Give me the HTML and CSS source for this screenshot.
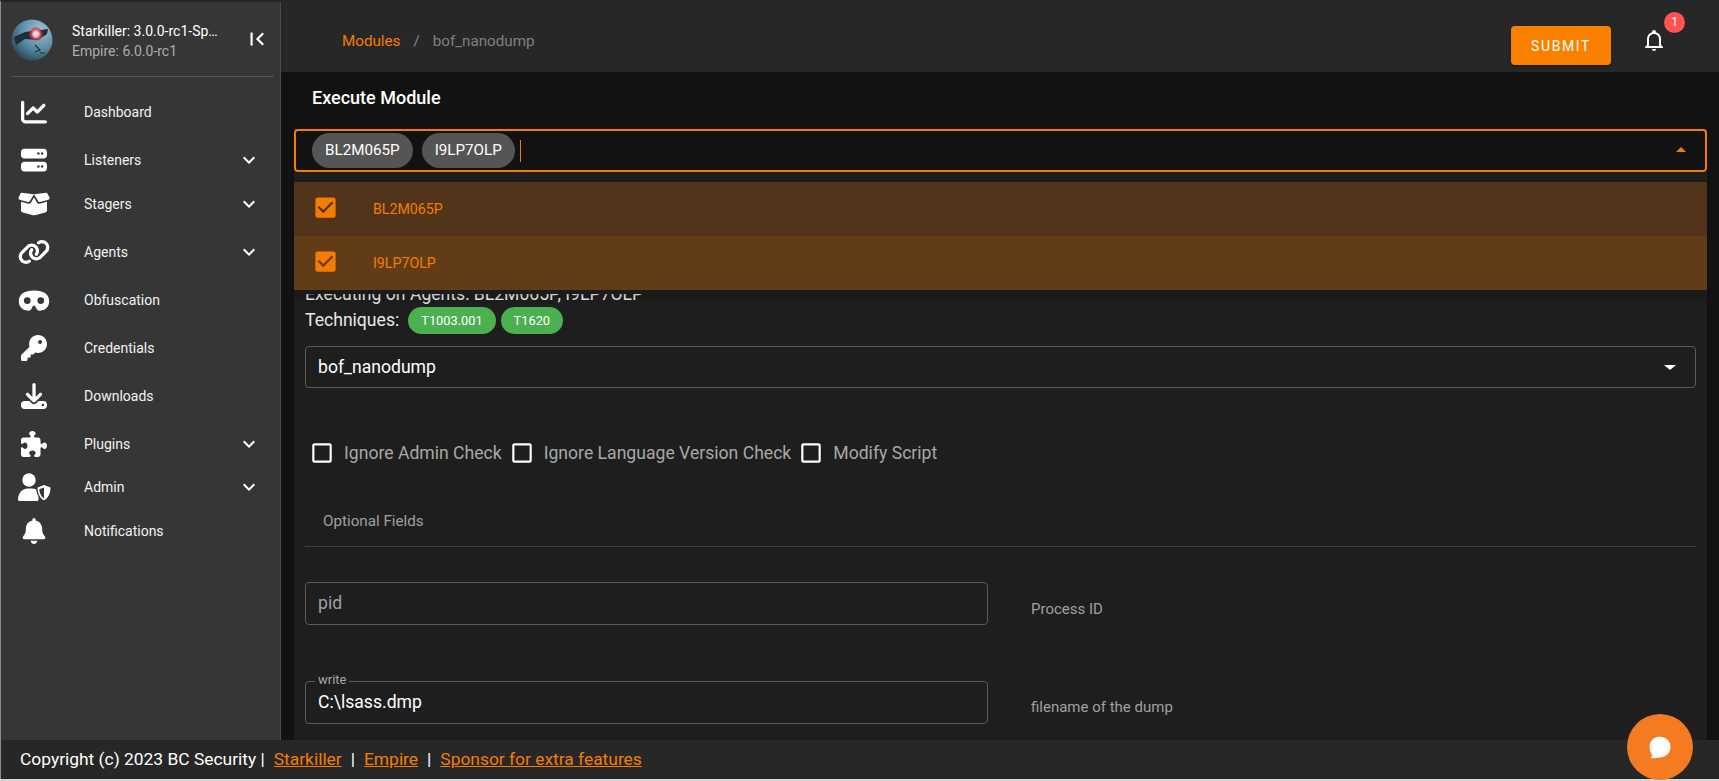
FILE: index.html
```html
<!DOCTYPE html>
<html lang="en">
<head>
    <meta charset="UTF-8">
    <meta name="viewport" content="width=device-width, initial-scale=1.0">
    <title>Starkiller - bof_nanodump</title>
    <link rel="stylesheet" href="styles.css">
</head>
<body>
    <div class="window">
        <div class="layout">
            <!-- Sidebar -->
            <aside class="sidebar">
                <div class="brand">
                    <svg class="avatar" viewBox="0 0 42 42">
                        <defs>
                            <radialGradient id="ball" cx="70%" cy="25%" r="95%">
                                <stop offset="0" stop-color="#9cc2d4"/>
                                <stop offset="0.5" stop-color="#5a8ca6"/>
                                <stop offset="1" stop-color="#1a2e3a"/>
                            </radialGradient>
                            <radialGradient id="eye">
                                <stop offset="0" stop-color="#fff"/>
                                <stop offset="0.35" stop-color="#ffc4ca"/>
                                <stop offset="0.7" stop-color="#d8303f" stop-opacity="0.8"/>
                                <stop offset="1" stop-color="#d8303f" stop-opacity="0"/>
                            </radialGradient>
                        </defs>
                        <circle cx="21" cy="21" r="20.500" fill="url(#ball)"/>
                        <path d="M3 18 L14 13 L37 10 L36 15 L27 21 L14 20 L5 26 Z" fill="#1e2f39"/>
                        <circle cx="25" cy="15" r="7.500" fill="url(#eye)"/>
                        <path d="M24 26 L29 31 L24 33 M29 34 H34" fill="none" stroke="#1e2f39" stroke-width="1.200"/>
                    </svg>
                    <div class="brand-text">
                        <div class="brand-title">Starkiller: 3.0.0-rc1-Sponsors</div>
                        <div class="brand-sub">Empire: 6.0.0-rc1</div>
                    </div>
                    <svg class="collapse-icon" viewBox="0 0 24 24"><path d="M18.410,16.590L13.820,12L18.410,7.410L17,6L11,12L17,18L18.410,16.590M6,6H8V18H6V6Z"/></svg>
                </div>
                <nav class="nav">
                    <a class="nav-item">
                        <span class="nav-icon"><svg class="icon-26" viewBox="0 0 512 512"><path d="M64 64c0-17.700-14.300-32-32-32S0 46.300 0 64V400c0 44.200 35.800 80 80 80H480c17.700 0 32-14.300 32-32s-14.300-32-32-32H80c-8.800 0-16-7.200-16-16V64zm406.600 86.600c12.500-12.500 12.500-32.800 0-45.300s-32.800-12.500-45.300 0L320 210.700l-57.400-57.400c-12.500-12.500-32.800-12.500-45.300 0l-112 112c-12.500 12.500-12.500 32.800 0 45.300s32.800 12.500 45.300 0L240 221.300l57.400 57.400c12.500 12.500 32.800 12.500 45.300 0l128-128z"/></svg></span>
                        Dashboard
                    </a>
                    <a class="nav-item">
                        <span class="nav-icon"><svg class="icon-26" viewBox="0 0 512 512"><path d="M64 32C28.700 32 0 60.700 0 96v64c0 35.300 28.700 64 64 64H448c35.300 0 64-28.700 64-64V96c0-35.300-28.700-64-64-64H64zm280 72a24 24 0 1 1 0 48 24 24 0 1 1 0-48zm48 24a24 24 0 1 1 48 0 24 24 0 1 1 -48 0zM64 288c-35.300 0-64 28.700-64 64v64c0 35.300 28.700 64 64 64H448c35.300 0 64-28.700 64-64V352c0-35.300-28.700-64-64-64H64zm280 72a24 24 0 1 1 0 48 24 24 0 1 1 0-48zm48 24a24 24 0 1 1 48 0 24 24 0 1 1 -48 0z"/></svg></span>
                        Listeners
                        <svg class="chevron" viewBox="0 0 24 24"><path d="M7.410,8.580L12,13.170L16.590,8.580L18,10L12,16L6,10L7.410,8.580Z"/></svg>
                    </a>
                    <a class="nav-item nav-item-stagers">
                        <span class="nav-icon"><svg class="icon-32" viewBox="0 0 640 512"><path d="M58.900 42.100c3-6.100 9.600-9.600 16.300-8.700L320 64 564.800 33.400c6.700-.8 13.300 2.700 16.300 8.700l41.700 83.400c9 17.900-.6 39.600-19.800 45.100L439.600 217.300c-13.900 4-28.800-1.900-36.200-14.300L320 64 236.600 203c-7.400 12.400-22.300 18.300-36.200 14.300L37.100 170.600c-19.300-5.500-28.800-27.200-19.800-45.100L58.900 42.100zM321.100 128l54.900 91.400c14.900 24.800 44.600 36.600 72.500 28.600L576 211.600v167c0 22-15 41.200-36.400 46.600l-204.100 51c-10.200 2.600-20.900 2.600-31 0l-204.100-51C79 419.700 64 400.500 64 378.500v-167L191.600 248c27.800 8 57.600-3.800 72.500-28.600L318.900 128h2.200z"/></svg></span>
                        Stagers
                        <svg class="chevron" viewBox="0 0 24 24"><path d="M7.410,8.580L12,13.170L16.590,8.580L18,10L12,16L6,10L7.410,8.580Z"/></svg>
                    </a>
                    <a class="nav-item">
                        <span class="nav-icon"><svg class="icon-32" viewBox="0 0 640 512"><path d="M579.800 267.700c56.500-56.500 56.500-148 0-204.500c-50-50-128.800-56.500-186.300-15.400l-1.600 1.100c-14.400 10.300-17.700 30.300-7.400 44.600s30.300 17.700 44.600 7.400l1.600-1.100c32.100-22.900 76-19.300 103.800 8.600c31.500 31.500 31.500 82.500 0 114L422.300 334.800c-31.500 31.500-82.500 31.500-114 0c-27.900-27.900-31.500-71.800-8.600-103.800l1.100-1.600c10.300-14.400 6.900-34.400-7.400-44.600s-34.400-6.900-44.600 7.400l-1.100 1.600C206.500 251.200 213 330 263 380c56.500 56.500 148 56.500 204.500 0L579.800 267.700zM60.200 244.300c-56.500 56.500-56.500 148 0 204.500c50 50 128.800 56.500 186.300 15.400l1.600-1.100c14.400-10.300 17.700-30.300 7.400-44.600s-30.300-17.700-44.600-7.400l-1.600 1.100c-32.100 22.900-76 19.300-103.800-8.600C74 372 74 321 105.500 289.500L217.700 177.200c31.500-31.500 82.500-31.500 114 0c27.900 27.900 31.500 71.800 8.600 103.900l-1.100 1.600c-10.300 14.400-6.900 34.400 7.400 44.600s34.400 6.900 44.600-7.400l1.100-1.600C433.500 260.800 427 182 377 132c-56.500-56.500-148-56.500-204.500 0L60.200 244.300z"/></svg></span>
                        Agents
                        <svg class="chevron" viewBox="0 0 24 24"><path d="M7.410,8.580L12,13.170L16.590,8.580L18,10L12,16L6,10L7.410,8.580Z"/></svg>
                    </a>
                    <a class="nav-item">
                        <span class="nav-icon"><svg class="icon-30" viewBox="0 0 576 512"><path d="M288 64C64 64 0 160 0 272S80 448 176 448h8.400c24.200 0 46.400-13.700 57.200-35.400l23.200-46.300c4.400-8.800 13.300-14.300 23.200-14.300s18.800 5.500 23.200 14.300l23.200 46.300c10.800 21.700 33 35.400 57.200 35.400H400c96 0 176-64 176-176s-64-208-288-208zM96 256a64 64 0 1 1 128 0A64 64 0 1 1 96 256zm320-64a64 64 0 1 1 0 128 64 64 0 1 1 0-128z"/></svg></span>
                        Obfuscation
                    </a>
                    <a class="nav-item">
                        <span class="nav-icon"><svg class="icon-26" viewBox="0 0 512 512"><path d="M336 352c97.200 0 176-78.800 176-176S433.200 0 336 0S160 78.800 160 176c0 18.700 2.900 36.800 8.300 53.700L7 391c-4.500 4.500-7 10.600-7 17v80c0 13.300 10.700 24 24 24h80c13.300 0 24-10.700 24-24V448h40c13.300 0 24-10.700 24-24V384h40c6.400 0 12.500-2.500 17-7l33.300-33.300c16.900 5.400 35 8.300 53.700 8.300zM376 96a40 40 0 1 1 0 80 40 40 0 1 1 0-80z"/></svg></span>
                        Credentials
                    </a>
                    <a class="nav-item">
                        <span class="nav-icon"><svg class="icon-26" viewBox="0 0 512 512"><path d="M288 32c0-17.700-14.300-32-32-32s-32 14.300-32 32V274.700l-73.400-73.400c-12.500-12.500-32.800-12.500-45.300 0s-12.500 32.800 0 45.300l128 128c12.500 12.500 32.800 12.500 45.300 0l128-128c12.500-12.500 12.500-32.800 0-45.300s-32.800-12.500-45.300 0L288 274.700V32zM64 352c-35.300 0-64 28.700-64 64v32c0 35.300 28.700 64 64 64H448c35.300 0 64-28.700 64-64V416c0-35.300-28.700-64-64-64H346.500l-45.300 45.300c-25 25-65.500 25-90.500 0L165.500 352H64zm368 56a24 24 0 1 1 0 48 24 24 0 1 1 0-48z"/></svg></span>
                        Downloads
                    </a>
                    <a class="nav-item">
                        <span class="nav-icon"><svg class="icon-26" viewBox="0 0 512 512"><path d="M192 104.800c0-9.200-5.800-17.300-13.200-22.800C167.200 73.300 160 61.300 160 48c0-26.500 28.700-48 64-48s64 21.500 64 48c0 13.300-7.200 25.300-18.800 34c-7.400 5.500-13.200 13.600-13.200 22.800c0 12.800 10.400 23.200 23.200 23.200H336c26.500 0 48 21.500 48 48v56.800c0 12.800 10.400 23.200 23.200 23.200c9.200 0 17.300-5.800 22.800-13.200c8.700-11.600 20.700-18.800 34-18.800c26.500 0 48 28.700 48 64s-21.500 64-48 64c-13.300 0-25.300-7.200-34-18.800c-5.500-7.400-13.600-13.200-22.800-13.200c-12.800 0-23.200 10.400-23.200 23.200V464c0 26.500-21.500 48-48 48H279.200c-12.800 0-23.200-10.400-23.200-23.200c0-9.200 5.800-17.300 13.200-22.800c11.600-8.700 18.800-20.700 18.800-34c0-26.500-28.700-48-64-48s-64 21.500-64 48c0 13.300 7.200 25.300 18.800 34c7.400 5.500 13.200 13.600 13.200 22.800c0 12.800-10.400 23.200-23.200 23.200H48c-26.500 0-48-21.500-48-48V343.200C0 330.400 10.400 320 23.200 320c9.200 0 17.300 5.800 22.800 13.200C54.700 344.800 66.700 352 80 352c26.500 0 48-28.700 48-64s-21.500-64-48-64c-13.300 0-25.300 7.200-34 18.800C40.500 250.200 32.400 256 23.200 256C10.400 256 0 245.600 0 232.800V176c0-26.500 21.500-48 48-48H168.800c12.800 0 23.200-10.400 23.200-23.200z"/></svg></span>
                        Plugins
                        <svg class="chevron" viewBox="0 0 24 24"><path d="M7.410,8.580L12,13.170L16.590,8.580L18,10L12,16L6,10L7.410,8.580Z"/></svg>
                    </a>
                    <a class="nav-item nav-item-admin">
                        <span class="nav-icon">
                            <svg class="icon-34" viewBox="0 0 36 28">
                                <circle cx="13" cy="7" r="6.700"/>
                                <path d="M2 26.500C2 20 6.500 15.500 12 15.500H16C19 15.500 21 16.500 22.500 18L22.500 26.500C22.500 27.400 22 28 21.500 28H3.500C2.600 28 2 27.400 2 26.500Z"/>
                                <path class="shield-gap" d="M28 10.500L36 13.500C36 20 33.500 26 28 29C22.500 26 20 20 20 13.500Z"/>
                                <path d="M28 12L34.500 14.400C34.500 20 32.300 25 28 27.300C23.700 25 21.500 20 21.500 14.400ZM28 14.500L23.300 16.200C23.500 20 25 23.500 28 25.200Z"/>
                            </svg>
                        </span>
                        Admin
                        <svg class="chevron" viewBox="0 0 24 24"><path d="M7.410,8.580L12,13.170L16.590,8.580L18,10L12,16L6,10L7.410,8.580Z"/></svg>
                    </a>
                    <a class="nav-item">
                        <span class="nav-icon"><svg class="icon-26" viewBox="0 0 448 512"><path d="M224 0c-17.700 0-32 14.300-32 32V51.200C119 66 64 130.600 64 208v18.800c0 47-17.300 92.400-48.500 127.600l-7.400 8.300c-8.400 9.400-10.400 22.900-5.300 34.400S19.400 416 32 416H416c12.600 0 24-7.400 29.200-18.900s3.100-25-5.300-34.400l-7.400-8.300C401.300 319.200 384 273.900 384 226.800V208c0-77.400-55-142-128-156.800V32c0-17.700-14.300-32-32-32zm45.300 493.300c12-12 18.700-28.300 18.700-45.300H224 160c0 17 6.700 33.300 18.700 45.300s28.300 18.700 45.300 18.700s33.300-6.700 45.300-18.700z"/></svg></span>
                        Notifications
                    </a>
                </nav>
            </aside>

            <div class="page">
                <!-- Top bar -->
                <header class="topbar">
                    <div class="breadcrumbs">
                        <a class="crumb-link">Modules</a>
                        <span class="crumb-sep">/</span>
                        <span class="crumb-current">bof_nanodump</span>
                    </div>
                    <button class="submit-btn">Submit</button>
                    <div class="bell">
                        <svg viewBox="0 0 24 24"><path d="M10 21H14C14 22.100 13.100 23 12 23S10 22.100 10 21M21 19V20H3V19L5 17V11C5 7.900 7 5.200 10 4.300V4C10 2.900 10.900 2 12 2S14 2.900 14 4V4.300C17 5.200 19 7.900 19 11V17L21 19M17 11C17 8.200 14.800 6 12 6S7 8.200 7 11V18H17V11Z"/></svg>
                        <span class="badge">1</span>
                    </div>
                </header>

                <main class="main">
                    <h2 class="main-title">Execute Module</h2>

                    <!-- Agent select -->
                    <div class="agent-field">
                        <span class="chip">BL2M065P</span>
                        <span class="chip">I9LP7OLP</span>
                        <span class="caret"></span>
                        <span class="arrow-up"></span>
                    </div>

                    <!-- Open dropdown -->
                    <div class="agent-menu">
                        <div class="agent-option">
                            <svg class="option-check" viewBox="0 0 24 24"><path d="M10,17L5,12L6.410,10.590L10,14.170L17.590,6.580L19,8M19,3H5C3.890,3 3,3.890 3,5V19A2,2 0 0,0 5,21H19A2,2 0 0,0 21,19V5C21,3.890 20.100,3 19,3Z"/></svg>
                            BL2M065P
                        </div>
                        <div class="agent-option agent-option-hover">
                            <svg class="option-check" viewBox="0 0 24 24"><path d="M10,17L5,12L6.410,10.590L10,14.170L17.590,6.580L19,8M19,3H5C3.890,3 3,3.890 3,5V19A2,2 0 0,0 5,21H19A2,2 0 0,0 21,19V5C21,3.890 20.100,3 19,3Z"/></svg>
                            I9LP7OLP
                        </div>
                    </div>

                    <div class="card">
                        <div class="executing">Executing on Agents: BL2M065P, I9LP7OLP</div>
                        <div class="techniques">
                            <span class="techniques-label">Techniques:</span>
                            <span class="tag">T1003.001</span>
                            <span class="tag">T1620</span>
                        </div>

                        <div class="module-select">
                            bof_nanodump
                            <span class="arrow-down"></span>
                        </div>

                        <div class="checks">
                            <label class="check">
                                <svg viewBox="0 0 24 24"><path d="M19,3H5C3.890,3 3,3.890 3,5V19A2,2 0 0,0 5,21H19A2,2 0 0,0 21,19V5C21,3.890 20.100,3 19,3M19,5V19H5V5H19Z"/></svg>
                                Ignore Admin Check
                            </label>
                            <label class="check">
                                <svg viewBox="0 0 24 24"><path d="M19,3H5C3.890,3 3,3.890 3,5V19A2,2 0 0,0 5,21H19A2,2 0 0,0 21,19V5C21,3.890 20.100,3 19,3M19,5V19H5V5H19Z"/></svg>
                                Ignore Language Version Check
                            </label>
                            <label class="check">
                                <svg viewBox="0 0 24 24"><path d="M19,3H5C3.890,3 3,3.890 3,5V19A2,2 0 0,0 5,21H19A2,2 0 0,0 21,19V5C21,3.890 20.100,3 19,3M19,5V19H5V5H19Z"/></svg>
                                Modify Script
                            </label>
                        </div>

                        <div class="tabs">
                            <span class="tab">Optional Fields</span>
                        </div>

                        <div class="field-row">
                            <div class="text-field"><span class="placeholder">pid</span></div>
                            <div class="field-help">Process ID</div>
                        </div>

                        <div class="field-row field-row-filled">
                            <div class="text-field">
                                <span class="float-label">write</span>
                                <span class="value">C:\lsass.dmp</span>
                            </div>
                            <div class="field-help field-help-filled">filename of the dump</div>
                        </div>
                    </div>
                </main>
            </div>
        </div>

        <footer class="footer">Copyright (c) 2023 BC Security |<a class="footer-link">Starkiller</a>|<a class="footer-link">Empire</a>|<a class="footer-link">Sponsor for extra features</a></footer>

        <!-- Chat launcher floats over everything -->
        <button class="chat-btn">
            <svg viewBox="0 0 22 23">
                <path fill="#e6eef8" d="M11 0.500C5 0.500 0.500 5 0.500 11C0.500 14 1.500 16.500 3 18.500C3 20 2.500 21 1.500 22C4 22.500 6 22.300 8 21.700H11Z"/>
                <circle cx="11.300" cy="11" r="10.300" fill="#fff"/>
                <path fill="#fff" d="M11 21.300H5L8 15Z"/>
            </svg>
        </button>
    </div>
</body>
</html>
```

FILE: styles.css
```css
* {
    box-sizing: border-box;
}

html, body {
    height: 100%;
}

body {
    margin: 0;
    background-color: #d9d9d9;
    color: #fff;
    font-family: Roboto, "Liberation Sans", sans-serif;
    overflow: hidden;
}

.window {
    position: relative;
    height: 779px;
    display: flex;
    flex-direction: column;
    border-top: 2px solid #22262c;
    border-left: 1px solid #8c8c8c;
}

.layout {
    flex: 1;
    display: flex;
    min-height: 0;
}

/* Sidebar */
.sidebar {
    width: 280px;
    flex-shrink: 0;
    background-color: #363636;
    border-right: 1px solid #4a4a4a;
}

.brand {
    height: 75px;
    margin: 0 6px 0 10px;
    display: flex;
    align-items: center;
    border-bottom: 1px solid #525252;
}

.avatar {
    width: 42px;
    height: 42px;
    margin-top: 2px;
    flex-shrink: 0;
}

.brand-text {
    width: 148px;
    margin-left: 19px;
    padding-top: 3px;
    font-size: 14px;
    line-height: 20px;
}

.brand-title {
    white-space: nowrap;
    overflow: hidden;
    text-overflow: ellipsis;
}

.brand-sub {
    color: #adadad;
}

.collapse-icon {
    width: 26px;
    height: 26px;
    margin-left: 24px;
    fill: #fff;
}

.nav {
    padding-top: 11px;
}

.nav-item {
    height: 48px;
    display: flex;
    align-items: center;
    padding-right: 19px;
    font-size: 14px;
    color: #f2f2f2;
}

.nav-item-stagers {
    height: 40px;
    margin-bottom: 4px;
}

.nav-item-admin {
    height: 38px;
    margin-bottom: 1px;
}

.nav-icon {
    width: 83px;
    padding-left: 15px;
    flex-shrink: 0;
    display: flex;
}

.nav-icon svg {
    fill: #fff;
    display: block;
}

.icon-26 {
    width: 36px;
    height: 26px;
}

.icon-30 {
    width: 36px;
    height: 27px;
}

.icon-32 {
    width: 36px;
    height: 26px;
}

.icon-34 {
    width: 36px;
    height: 28px;
}

.shield-gap {
    fill: #363636;
}

.chevron {
    width: 24px;
    height: 24px;
    margin-left: auto;
    fill: #fff;
}

/* Top bar */
.page {
    flex: 1;
    min-width: 0;
    display: flex;
    flex-direction: column;
}

.topbar {
    height: 70px;
    flex-shrink: 0;
    display: flex;
    align-items: flex-start;
    background-color: #272727;
    padding-left: 61px;
}

.breadcrumbs {
    display: flex;
    gap: 13px;
    margin-top: 29px;
    margin-right: auto;
    font-size: 15.2px;
    line-height: 20px;
}

.crumb-link {
    color: #f57c00;
}

.crumb-sep {
    color: #8a8a8a;
}

.crumb-current {
    color: #808080;
}

.submit-btn {
    width: 100px;
    height: 39px;
    margin-top: 24px;
    border: none;
    border-radius: 4px;
    background-color: #fb8000;
    color: #fff;
    font-family: inherit;
    font-size: 14px;
    letter-spacing: 1.6px;
    text-transform: uppercase;
    box-shadow: 0 2px 3px rgba(0, 0, 0, 0.3);
}

.bell {
    position: relative;
    width: 24px;
    height: 24px;
    margin: 26px 53px 0 31px;
}

.bell svg {
    width: 24px;
    height: 24px;
    fill: #fff;
    display: block;
}

.badge {
    position: absolute;
    left: 22px;
    top: -16px;
    width: 21px;
    height: 21px;
    border-radius: 50%;
    background-color: #ff5252;
    font-size: 12px;
    line-height: 21px;
    text-align: center;
}

/* Main area */
.main {
    position: relative;
    flex: 1;
    min-height: 0;
    overflow: hidden;
    background-color: #121212;
    padding: 0 12px 0 13px;
}

.main-title {
    margin: 0;
    height: 57px;
    padding: 15px 0 0 18px;
    font-size: 18px;
    line-height: 22px;
    font-weight: 500;
}

.agent-field {
    position: relative;
    height: 43px;
    display: flex;
    align-items: center;
    gap: 9px;
    padding-left: 16px;
    border: 2px solid #f57c00;
    border-radius: 4px;
}

.chip {
    height: 35px;
    padding: 0 13px;
    border-radius: 18px;
    background-color: #555;
    font-size: 15.2px;
    line-height: 35px;
}

.caret {
    width: 1px;
    height: 22px;
    margin-left: -4px;
    background-color: #f57c00;
}

.arrow-up {
    position: absolute;
    right: 19px;
    top: 16px;
    border-left: 5px solid transparent;
    border-right: 5px solid transparent;
    border-bottom: 5px solid #f57c00;
}

.agent-menu {
    position: absolute;
    top: 110px;
    left: 13px;
    right: 12px;
    padding-bottom: 4px;
    background-color: #1b1b1b;
    box-shadow: 0 4px 5px rgba(0, 0, 0, 0.15);
    z-index: 2;
}

.agent-option {
    height: 54px;
    display: flex;
    align-items: center;
    padding-left: 18px;
    background-color: #51341a;
    color: #f57c00;
    font-size: 14.2px;
}

.agent-option-hover {
    background-color: #623c17;
}

.option-check {
    width: 27px;
    height: 27px;
    margin-right: 34px;
    margin-bottom: 3px;
    fill: #f57c00;
}

.card {
    height: 600px;
    background-color: #1e1e1e;
    padding: 0 11px;
}

.executing {
    padding-top: 113px;
    font-size: 17.6px;
    line-height: 19px;
    color: #e8e8e8;
}

.techniques {
    display: flex;
    align-items: center;
    margin-top: 3px;
    gap: 5px;
    height: 27px;
}

.techniques-label {
    font-size: 17.6px;
    margin-right: 4px;
    padding-bottom: 2px;
    color: #e8e8e8;
}

.tag {
    height: 27px;
    padding: 0 13px;
    border-radius: 14px;
    background-color: #4caf50;
    font-size: 12.8px;
    line-height: 27px;
}

.module-select {
    position: relative;
    height: 42px;
    margin-top: 12px;
    padding-left: 12px;
    border: 1px solid #5a5a5a;
    border-radius: 4px;
    font-size: 17.6px;
    line-height: 40px;
}

.arrow-down {
    position: absolute;
    right: 19px;
    top: 18px;
    border-left: 6px solid transparent;
    border-right: 6px solid transparent;
    border-top: 5px solid #fff;
}

.checks {
    display: flex;
    gap: 3px;
    margin-top: 52px;
    height: 26px;
}

.check {
    display: flex;
    align-items: center;
    gap: 10px;
    padding-left: 4px;
    font-size: 17.6px;
    color: #a8a8a8;
    white-space: nowrap;
}

.check svg {
    width: 26px;
    height: 26px;
    margin-right: -1px;
    fill: #fff;
    flex-shrink: 0;
}

.tabs {
    margin-top: 36px;
    height: 45px;
    border-bottom: 1px solid #3d3d3d;
    padding: 0 0 0 18px;
}

.tab {
    display: block;
    font-size: 15.2px;
    line-height: 20px;
    padding-top: 9px;
    color: #a0a0a0;
}

.field-row {
    display: flex;
    margin-top: 35px;
}

.field-row-filled {
    margin-top: 56px;
}

.text-field {
    position: relative;
    width: 683px;
    height: 43px;
    padding-left: 12px;
    border: 1px solid #5a5a5a;
    border-radius: 4px;
    font-size: 17.6px;
    line-height: 41px;
}

.placeholder {
    color: #a0a0a0;
}

.float-label {
    position: absolute;
    left: 9px;
    top: -9px;
    padding: 0 3px;
    background-color: #1e1e1e;
    font-size: 13px;
    line-height: 14px;
    color: #a8a8a8;
}

.field-help {
    margin-left: 43px;
    padding-top: 18px;
    font-size: 15px;
    line-height: 18px;
    color: #a0a0a0;
}

.field-help-filled {
    padding-top: 17px;
}

/* Footer */
.footer {
    height: 39px;
    flex-shrink: 0;
    padding-left: 19px;
    background-color: #272727;
    font-size: 17.4px;
    line-height: 39px;
    white-space: nowrap;
}

.footer-link {
    margin: 0 9px;
    color: #f57c00;
    text-decoration: underline;
}

.chat-btn {
    position: absolute;
    left: 1626px;
    top: 712px;
    width: 66px;
    height: 66px;
    padding: 0;
    border: none;
    border-radius: 50%;
    background-color: #f47b20;
    display: flex;
    align-items: center;
    justify-content: center;
}

.chat-btn svg {
    width: 22px;
    height: 23px;
}
```
